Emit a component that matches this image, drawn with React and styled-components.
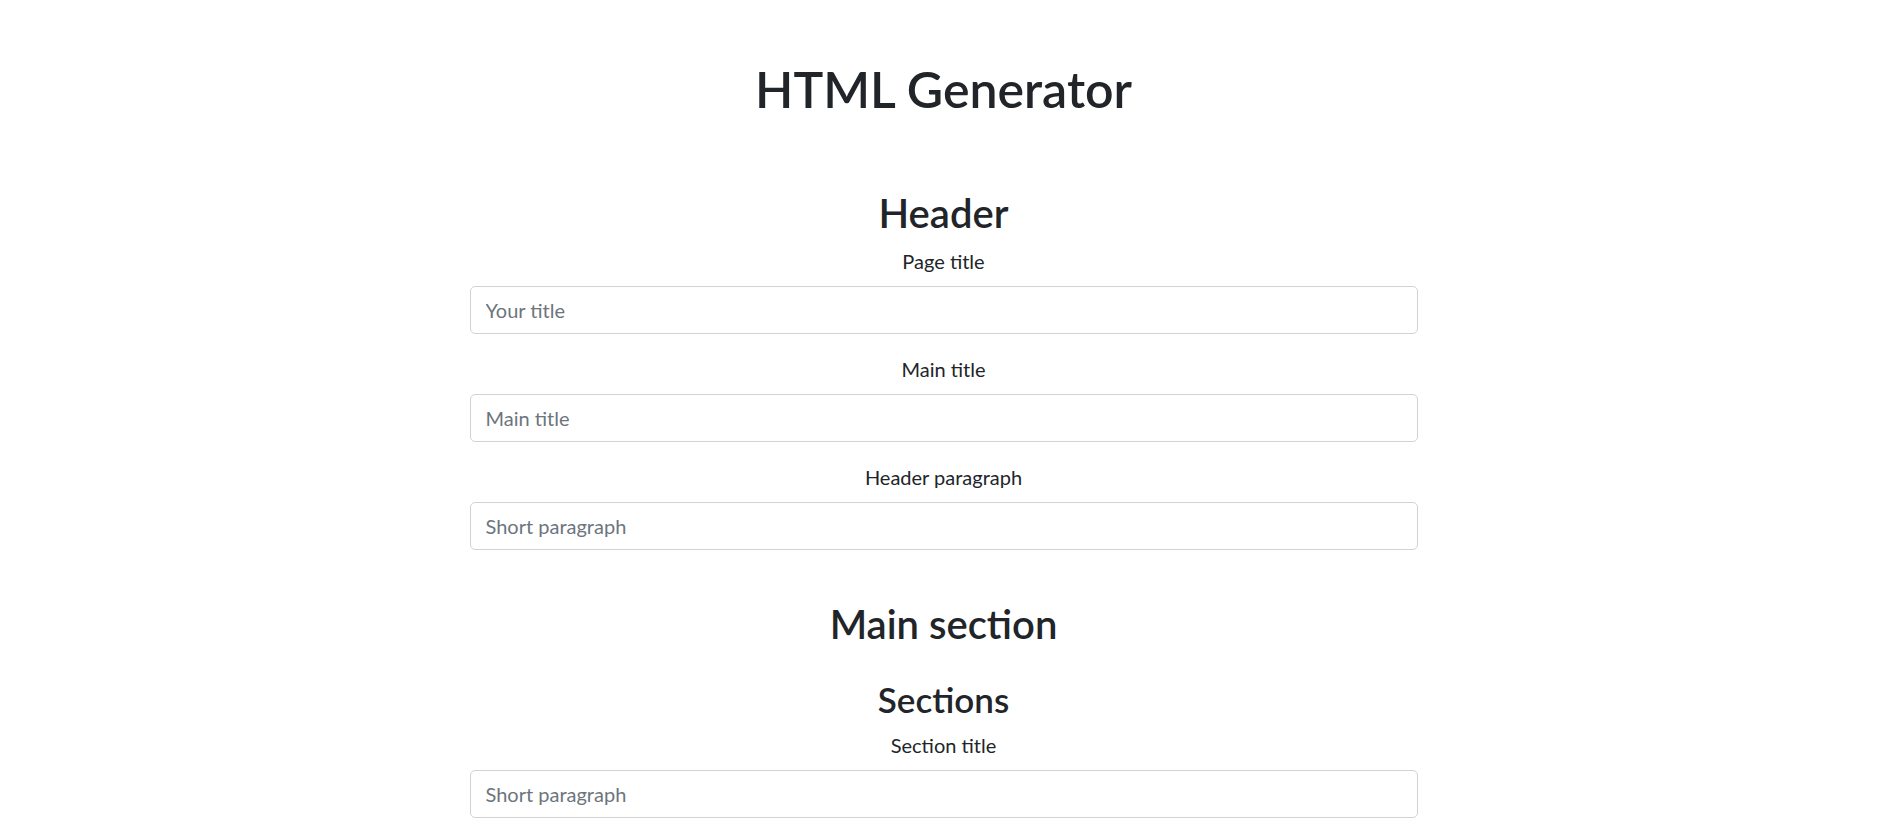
import React from 'react'
import styled, { createGlobalStyle } from 'styled-components'

const GlobalStyle = createGlobalStyle`
    *, *::before, *::after {
        box-sizing: border-box;
    }

    body {
        margin: 0;
        background-color: #fff;
        color: #212529;
        font-family: Lato, "Noto Sans", "Liberation Sans", sans-serif;
        font-size: 20px;
        line-height: 1.5;
    }
`

const Page = styled.div`
    width: 100%;
    padding-right: 5px;
    display: flex;
    flex-direction: column;
    align-items: center;
`

const Title = styled.h1`
    margin: 59px 0 68px;
    font-size: 50px;
    font-weight: 600;
    line-height: 1.2;
    text-align: center;
`

const Form = styled.form`
    width: 948px;
    display: flex;
    flex-direction: column;
`

const Section = styled.section`
    display: flex;
    flex-direction: column;
    margin-bottom: ${props => props.$gap || 0}px;
`

const Heading = styled.h2`
    margin: ${props => props.$top || 0}px 0 ${props => props.$bottom ?? 10}px;
    font-size: ${props => props.$size || 40}px;
    font-weight: 600;
    line-height: 1.2;
    text-align: center;
`

const Group = styled.div`
    display: flex;
    flex-direction: column;
    margin-bottom: 20px;
`

const Label = styled.label`
    display: block;
    margin-bottom: 10px;
    text-align: center;
    line-height: 30px;
`

const Input = styled.input`
    display: block;
    width: 100%;
    height: 48px;
    padding: 7.5px 15px;
    font-family: inherit;
    font-size: 20px;
    line-height: 30px;
    color: #495057;
    background-color: #fff;
    border: 1px solid #ced4da;
    border-radius: 5px;
    outline: none;

    &::placeholder {
        color: #6c757d;
        opacity: 1;
    }

    &:focus {
        border-color: #80bdff;
        box-shadow: 0 0 0 4px rgba(0, 123, 255, 0.25);
    }
`

const headerFields = [
    { id: 'pageTitle', label: 'Page title', placeholder: 'Your title' },
    { id: 'mainTitle', label: 'Main title', placeholder: 'Main title' },
    { id: 'headerParagraph', label: 'Header paragraph', placeholder: 'Short paragraph' },
]

const App = () => {
    return (
        <>
            <GlobalStyle />
            <Page>
                <Title>HTML Generator</Title>
                <Form onSubmit={e => e.preventDefault()}>
                    <Section $gap={30}>
                        <Heading $top={2} $bottom={9}>Header</Heading>
                        {headerFields.map(field => (
                            <Group key={field.id}>
                                <Label htmlFor={field.id}>{field.label}</Label>
                                <Input id={field.id} type="text" placeholder={field.placeholder} />
                            </Group>
                        ))}
                    </Section>
                    <Section>
                        <Heading>Main section</Heading>
                        <Heading as="h3" $size={35} $top={20}>Sections</Heading>
                        <Group>
                            <Label htmlFor="sectionTitle">Section title</Label>
                            <Input id="sectionTitle" type="text" placeholder="Short paragraph" />
                        </Group>
                    </Section>
                </Form>
            </Page>
        </>
    )
}

export default App
